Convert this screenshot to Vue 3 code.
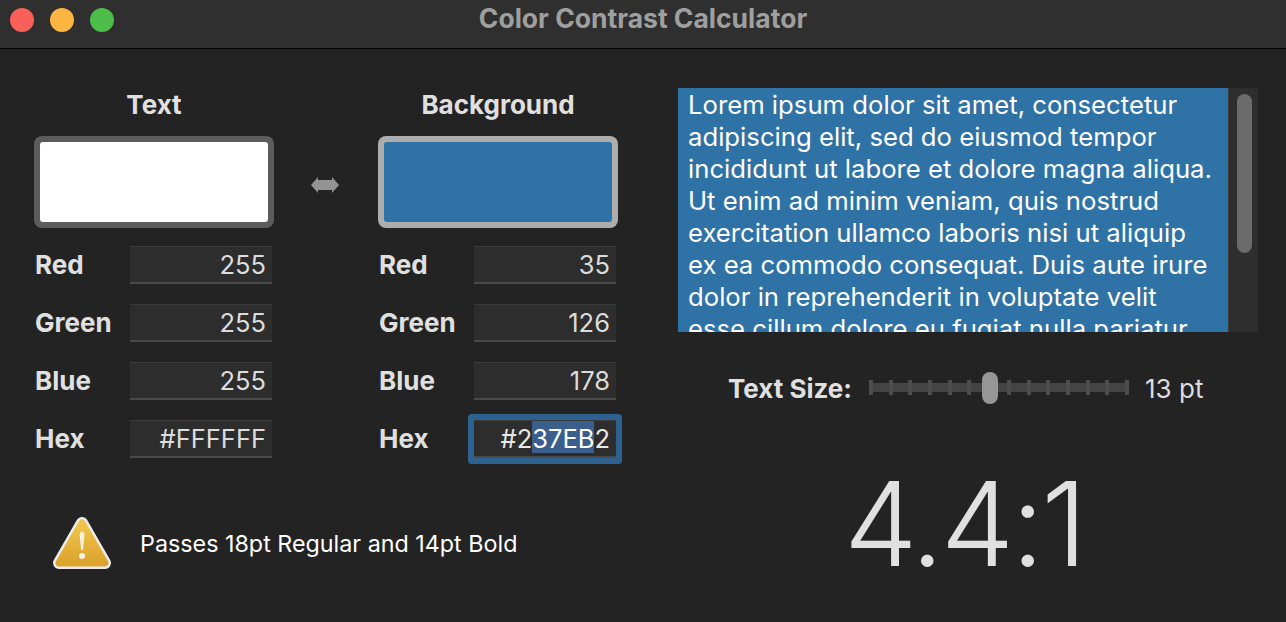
<script setup>
const columns = [
  {
    title: 'Text',
    swatch: 'swatch-text',
    rows: [
      { label: 'Red', value: '255' },
      { label: 'Green', value: '255' },
      { label: 'Blue', value: '255' },
      { label: 'Hex', value: '#FFFFFF' },
    ],
  },
  {
    title: 'Background',
    swatch: 'swatch-bg',
    rows: [
      { label: 'Red', value: '35' },
      { label: 'Green', value: '126' },
      { label: 'Blue', value: '178' },
      { label: 'Hex', before: '#2', selected: '37EB', after: '2', focused: true },
    ],
  },
]

const ticks = Array.from({ length: 14 }, (_, i) => i)

const lorem =
  'Lorem ipsum dolor sit amet, consectetur adipiscing elit, sed do eiusmod tempor incididunt ut labore et dolore magna aliqua. Ut enim ad minim veniam, quis nostrud exercitation ullamco laboris nisi ut aliquip ex ea commodo consequat. Duis aute irure dolor in reprehenderit in voluptate velit esse cillum dolore eu fugiat nulla pariatur.'
</script>

<template>
  <div class="window">
    <header class="titlebar">
      <div class="lights">
        <span class="light red"></span>
        <span class="light yellow"></span>
        <span class="light green"></span>
      </div>
      <div class="window-title">Color Contrast Calculator</div>
    </header>

    <main class="content">
      <section class="left">
        <div class="colors">
          <div v-for="(col, idx) in columns" :key="col.title" class="color-col" :class="{ second: idx === 1 }">
            <h2 class="col-title">{{ col.title }}</h2>
            <div class="swatch" :class="col.swatch"><div class="swatch-fill"></div></div>
            <div class="rows">
              <div v-for="row in col.rows" :key="row.label" class="row">
                <span class="row-label">{{ row.label }}</span>
                <div class="field" :class="{ focused: row.focused }">
                  <template v-if="row.focused">{{ row.before }}<span class="sel">{{ row.selected }}</span>{{ row.after }}</template>
                  <template v-else>{{ row.value }}</template>
                </div>
              </div>
            </div>
            <svg v-if="idx === 0" class="swap" width="30" height="20" viewBox="0 0 30 20">
              <path d="M1 10 L8 2 L8 5 L22 5 L22 2 L29 10 L22 18 L22 15 L8 15 L8 18 Z" fill="#949494" />
            </svg>
          </div>
        </div>

        <div class="status">
          <svg class="warn" width="60" height="54" viewBox="0 0 60 54">
            <defs>
              <linearGradient id="warnFill" x1="0" y1="0" x2="0" y2="1">
                <stop offset="0" stop-color="#f0c64a" />
                <stop offset="1" stop-color="#dca32f" />
              </linearGradient>
            </defs>
            <path d="M30 7 L53 47 L7 47 Z" fill="#ececec" stroke="#ececec" stroke-width="12" stroke-linejoin="round" />
            <path d="M30 7 L53 47 L7 47 Z" fill="url(#warnFill)" stroke="url(#warnFill)" stroke-width="7" stroke-linejoin="round" />
            <path d="M27.5 18 Q30 13 32.5 18 L31 34 L29 34 Z" fill="#f4f0e4" />
            <circle cx="30" cy="40" r="3" fill="#f4f0e4" />
          </svg>
          <span class="status-text">Passes 18pt Regular and 14pt Bold</span>
        </div>
      </section>

      <section class="right">
        <div class="preview">
          <div class="preview-text">{{ lorem }}</div>
          <div class="scrollbar"><div class="scroll-thumb"></div></div>
        </div>

        <div class="size-row">
          <span class="size-label">Text Size:</span>
          <div class="slider">
            <div class="track"></div>
            <div class="tick-row">
              <span v-for="t in ticks" :key="t" class="tick"></span>
            </div>
            <div class="knob"></div>
          </div>
          <span class="size-value">13 pt</span>
        </div>

        <div class="ratio">4.4:1</div>
      </section>
    </main>
  </div>
</template>

<style>
html,
body {
  margin: 0;
  background: #232323;
}
</style>

<style scoped>
.window {
  width: 1286px;
  height: 622px;
  overflow: hidden;
  background: #232323;
  font-family: Inter, "Liberation Sans", sans-serif;
  color: #e0e0e0;
}

.titlebar {
  position: relative;
  height: 48px;
  background: #2f2f2f;
  border-bottom: 1px solid #000;
  display: flex;
  align-items: center;
  justify-content: center;
}

.lights {
  position: absolute;
  left: 10px;
  top: 8px;
  display: flex;
  gap: 16px;
}

.light {
  width: 24px;
  height: 24px;
  border-radius: 50%;
}
.red { background: #f9605a; }
.yellow { background: #fbb540; }
.green { background: #4dbd49; }

.window-title {
  font-size: 26.5px;
  font-weight: 700;
  color: #9f9f9f;
  margin-top: -12px;
}

.content {
  display: flex;
  padding: 39px 28px 0 34px;
}

.left {
  width: 644px;
}

.colors {
  display: flex;
  gap: 104px;
}

.color-col {
  position: relative;
  width: 240px;
}

.col-title {
  margin: 0;
  height: 36px;
  line-height: 34px;
  font-size: 26px;
  font-weight: 700;
  text-align: center;
  color: #e0e0e0;
}

.swatch {
  margin-top: 12px;
  height: 92px;
  box-sizing: border-box;
  padding: 6px;
  border-radius: 8px;
}
.swatch-fill {
  height: 100%;
  border-radius: 3px;
}
.swatch-text { background: #5c5c5c; }
.swatch-text .swatch-fill { background: #fff; }
.swatch-bg { background: #adadad; }
.swatch-bg .swatch-fill { background: #2f72a6; }

.swap {
  position: absolute;
  left: 276px;
  top: 87px;
}

.rows {
  margin-top: 18px;
  display: flex;
  flex-direction: column;
  gap: 20px;
}

.row {
  display: flex;
  align-items: center;
  height: 38px;
}

.row-label {
  width: 96px;
  box-sizing: border-box;
  padding-left: 1px;
  margin-top: -2px;
  font-size: 26px;
  font-weight: 700;
  color: #e0e0e0;
}

.field {
  width: 142px;
  height: 38px;
  box-sizing: border-box;
  padding-right: 6px;
  background: #2d2d2d;
  border-top: 1px solid #3b3b3b;
  border-bottom: 2px solid #4a4a4a;
  font-size: 25.5px;
  line-height: 36px;
  text-align: right;
  color: #dcdcdc;
}

.field.focused {
  box-shadow: 0 0 0 6px #2d618f;
  border-radius: 1px;
  color: #e8e8e8;
}

.sel {
  display: inline-block;
  height: 32px;
  line-height: 36px;
  vertical-align: top;
  background: #3a5f8c;
  color: #fff;
}

.status {
  display: flex;
  align-items: center;
  margin-top: 58px;
  margin-left: 18px;
}

.status-text {
  margin-left: 28px;
  font-size: 23.3px;
  color: #fff;
}

.right {
  width: 580px;
  display: flex;
  flex-direction: column;
}

.preview {
  display: flex;
  height: 244px;
  overflow: hidden;
}

.preview-text {
  width: 550px;
  box-sizing: border-box;
  padding: 1px 14px 1px 10px;
  background: #2f72a6;
  color: #fff;
  font-size: 25.7px;
  line-height: 32px;
}

.scrollbar {
  width: 30px;
  box-sizing: border-box;
  padding: 6px 6px 0 8px;
  background: #2e2e2e;
  border-left: 1px solid #3a3a3a;
}

.scroll-thumb {
  height: 159px;
  border-radius: 8px;
  background: #6b6b6b;
}

.size-row {
  display: flex;
  align-items: center;
  margin-top: 40px;
  padding-left: 50px;
  height: 32px;
}

.size-label {
  font-size: 26px;
  font-weight: 700;
  color: #e0e0e0;
}

.slider {
  position: relative;
  width: 260px;
  height: 32px;
  margin-left: 17px;
}

.track {
  position: absolute;
  left: 0;
  right: 0;
  top: 11px;
  height: 9px;
  background: #444;
}

.tick-row {
  position: absolute;
  inset: 8px 0 9px 0;
  display: flex;
  justify-content: space-between;
}

.tick {
  width: 4px;
  background: #4d4d4d;
}

.knob {
  position: absolute;
  left: 113px;
  top: 0;
  width: 16px;
  height: 32px;
  border-radius: 8px;
  background: #969696;
}

.size-value {
  margin-left: 16px;
  font-size: 26px;
  color: #dcdcdc;
}

.ratio {
  margin-top: 50px;
  margin-left: 166px;
  font-size: 117px;
  line-height: 140px;
  font-weight: 300;
  letter-spacing: -3px;
  color: #e0e0e0;
}
</style>
